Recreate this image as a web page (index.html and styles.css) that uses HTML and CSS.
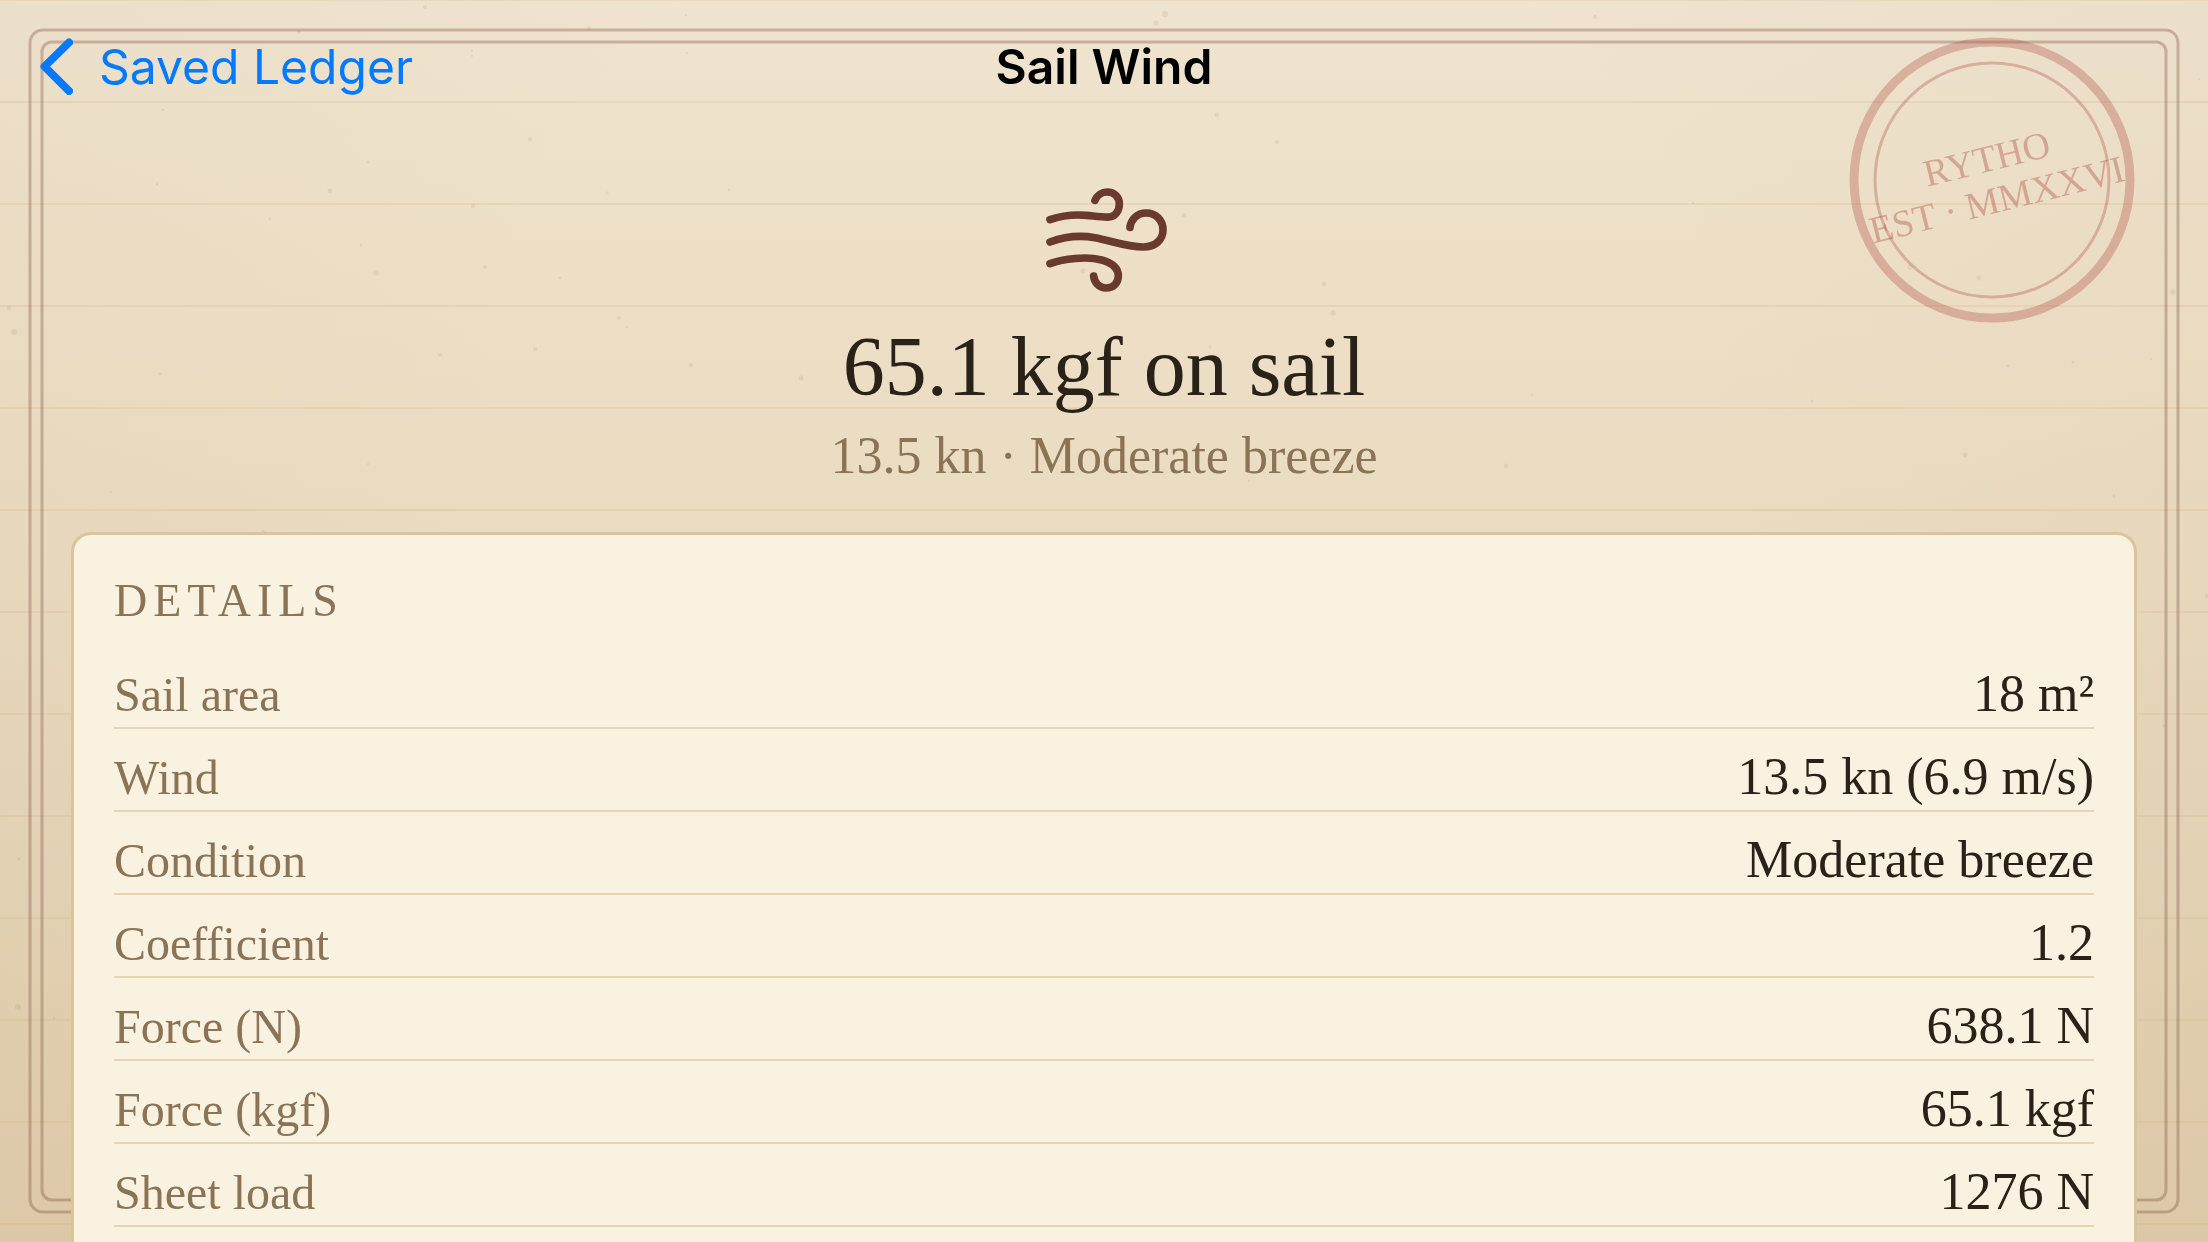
FILE: index.html
```html
<!DOCTYPE html>
<html lang="en">
<head>
<meta charset="utf-8">
<meta name="viewport" content="width=device-width, initial-scale=1">
<title>Sail Wind</title>
<link rel="stylesheet" href="styles.css">
</head>
<body>
<svg class="paper" aria-hidden="true">
  <g class="specks">
    <circle cx="425" cy="7" r="2"/><circle cx="299" cy="32" r="2"/><circle cx="589" cy="28" r="2"/><circle cx="686" cy="15" r="1"/>
    <circle cx="472" cy="51" r="1"/><circle cx="472" cy="56" r="1"/><circle cx="687" cy="53" r="1"/><circle cx="163" cy="110" r="1.3"/>
    <circle cx="530" cy="139" r="2.2"/><circle cx="368" cy="162" r="1.2"/><circle cx="157" cy="184" r="1.2"/><circle cx="330" cy="191" r="2.4"/>
    <circle cx="607" cy="193" r="1.5"/><circle cx="729" cy="190" r="1.3"/><circle cx="473" cy="206" r="2"/><circle cx="270" cy="219" r="1.2"/>
    <circle cx="361" cy="245" r="1.4"/><circle cx="376" cy="273" r="2.7"/><circle cx="485" cy="267" r="2"/><circle cx="560" cy="278" r="1.4"/>
    <circle cx="9" cy="308" r="2.2"/><circle cx="14" cy="332" r="3"/><circle cx="619" cy="318" r="2"/><circle cx="627" cy="327" r="1.2"/>
    <circle cx="535" cy="349" r="2"/><circle cx="440" cy="355" r="2"/><circle cx="691" cy="365" r="2.2"/><circle cx="801" cy="378" r="2.5"/>
    <circle cx="160" cy="374" r="1.2"/><circle cx="1083" cy="271" r="2.6"/><circle cx="368" cy="464" r="1"/><circle cx="111" cy="492" r="1"/>
    <circle cx="263" cy="532" r="2"/><circle cx="1165" cy="14" r="3"/><circle cx="1156" cy="23" r="2.6"/><circle cx="1595" cy="17" r="2"/>
    <circle cx="1217" cy="115" r="2.4"/><circle cx="1277" cy="142" r="2"/><circle cx="1184" cy="215" r="2.3"/><circle cx="1693" cy="203" r="1"/>
    <circle cx="2199" cy="79" r="1.3"/><circle cx="1324" cy="284" r="2.2"/><circle cx="1333" cy="313" r="2.7"/><circle cx="1210" cy="347" r="1.5"/>
    <circle cx="1910" cy="267" r="2.6"/><circle cx="1979" cy="278" r="2.4"/><circle cx="2173" cy="292" r="2.6"/><circle cx="2073" cy="362" r="1.5"/>
    <circle cx="2008" cy="366" r="1.3"/><circle cx="2151" cy="359" r="1.2"/><circle cx="1532" cy="395" r="1.2"/><circle cx="1812" cy="401" r="1.6"/>
    <circle cx="1506" cy="466" r="2.4"/><circle cx="1965" cy="455" r="2.4"/><circle cx="1249" cy="481" r="1.2"/><circle cx="2114" cy="496" r="1.2"/>
    <circle cx="19" cy="859" r="1.6"/><circle cx="18" cy="1007" r="3"/><circle cx="54" cy="1018" r="1"/><circle cx="2207" cy="596" r="2.2"/><circle cx="2164" cy="726" r="1.5"/>
  </g>
  <rect class="frame frame-outer" x="30" y="30" rx="13"/>
  <rect class="frame frame-inner" x="42" y="42" rx="10"/>
</svg>

<svg class="stamp" viewBox="-144 -144 288 288" role="img" aria-label="Rytho, established MMXXVI">
  <circle r="138" stroke-width="9"/>
  <circle r="117" stroke-width="3"/>
  <g transform="rotate(-14)">
    <text y="-9">RYTHO</text>
    <text y="33">EST · MMXXVI</text>
  </g>
</svg>

<header class="navbar">
  <a class="back" href="#ledger">
    <svg class="chevron" viewBox="0 0 33 57" aria-hidden="true"><path d="M29 4.500 4.500 28.500 29 53"/></svg>
    Saved Ledger
  </a>
  <h1 class="title">Sail Wind</h1>
</header>

<main class="content">
  <section class="summary">
    <svg class="wind" viewBox="72 54 360 312" aria-hidden="true">
      <path d="M90 149C130 135 165 133 200 136C230 139 250 142 268 141C285 140 298 123 298 102C298 80 282 66 262 66C245 66 231 76 225 91"/>
      <path d="M90 216C130 201 180 195 225 203C270 211 320 231 370 231C405 231 429 210 429 180C429 150 407 129 379 129C350 129 332 150 330 172"/>
      <path d="M90 281C130 266 200 258 245 270C280 280 295 298 295 318C295 340 279 354 258 354C237 354 223 337 221 318"/>
    </svg>
    <p class="headline">65.1 kgf on sail</p>
    <p class="subline">13.5 kn · Moderate breeze</p>
  </section>

  <section class="card">
    <h2 class="card-title">DETAILS</h2>
    <table class="details">
      <tbody>
        <tr><th scope="row">Sail area</th><td>18 m²</td></tr>
        <tr><th scope="row">Wind</th><td>13.5 kn (6.9 m/s)</td></tr>
        <tr><th scope="row">Condition</th><td>Moderate breeze</td></tr>
        <tr><th scope="row">Coefficient</th><td>1.2</td></tr>
        <tr><th scope="row">Force (N)</th><td>638.1 N</td></tr>
        <tr><th scope="row">Force (kgf)</th><td>65.1 kgf</td></tr>
        <tr><th scope="row">Sheet load</th><td>1276 N</td></tr>
      </tbody>
    </table>
  </section>
</main>
</body>
</html>
```
FILE: styles.css
```css
:root {
  --ink: #2a2118;
  --muted: #8b7355;
  --rust: #6b3a2e;
  --serif: "Liberation Serif", "Times New Roman", serif;
  --sans: Inter, "Liberation Sans", sans-serif;
}

* {
  box-sizing: border-box;
  margin: 0;
  padding: 0;
}

body {
  display: flex;
  flex-direction: column;
  height: 100vh;
  overflow: hidden;
  font-family: var(--serif);
  color: var(--ink);
  background:
    repeating-linear-gradient(to bottom, rgba(205, 160, 100, 0.17) 0 2px, transparent 2px 102px) 0 -1px / 100% calc(100% + 1px),
    radial-gradient(ellipse 75% 110% at 50% 30%, transparent 35%, rgba(150, 90, 60, 0.06) 100%),
    linear-gradient(to bottom, #efe4cf 0%, #ede0c7 20%, #eadcc1 42%, #e0cead 100%);
}

/* Paper texture and the double rule round the page */
.paper {
  position: fixed;
  inset: 0;
  width: 100%;
  height: 100%;
}

.specks {
  fill: rgba(139, 115, 85, 0.12);
}

.frame {
  fill: none;
  stroke: rgba(107, 58, 46, 0.3);
  stroke-width: 3px;
}

.frame-outer {
  width: calc(100% - 60px);
  height: calc(100% - 60px);
}

.frame-inner {
  width: calc(100% - 84px);
  height: calc(100% - 84px);
}

.stamp {
  position: fixed;
  top: 36px;
  right: 72px;
  width: 288px;
  height: 288px;
  overflow: visible;
}

.stamp circle {
  fill: none;
  stroke: rgba(168, 64, 56, 0.3);
}

.stamp text {
  font-family: var(--serif);
  font-size: 38px;
  text-anchor: middle;
  fill: rgba(168, 64, 56, 0.36);
}

.navbar {
  position: relative;
  display: grid;
  grid-template-columns: 1fr auto 1fr;
  align-items: center;
  flex: none;
  height: 132px;
  padding: 0 40px;
  font-family: var(--sans);
  font-size: 48px;
}

.back {
  display: flex;
  align-items: center;
  gap: 26px;
  color: #007aff;
  text-decoration: none;
}

.chevron {
  width: 33px;
  height: 57px;
  fill: none;
  stroke: currentColor;
  stroke-width: 8px;
  stroke-linecap: round;
  stroke-linejoin: round;
}

.title {
  font-size: 48px;
  font-weight: 600;
  color: #000;
}

.content {
  position: relative;
  flex: 1;
  min-height: 0;
  overflow-y: auto;
  scrollbar-width: none;
  padding: 56px 71px;
}

.summary {
  display: flex;
  flex-direction: column;
  align-items: center;
}

.wind {
  width: 120px;
  height: 104px;
  margin-bottom: 26px;
  overflow: visible;
  fill: none;
  stroke: var(--rust);
  stroke-width: 23px;
  stroke-linecap: round;
}

.headline {
  font-size: 84px;
  line-height: 98px;
}

.subline {
  margin-top: 10px;
  font-size: 52px;
  line-height: 60px;
  color: var(--muted);
}

.card {
  margin-top: 46px;
  padding: 39px 40px 40px;
  background: #faf2e0;
  border: 3px solid #dac499;
  border-radius: 20px;
}

.card-title {
  margin-bottom: 18px;
  font-size: 46px;
  font-weight: 400;
  line-height: 54px;
  letter-spacing: 6px;
  color: var(--muted);
}

.details {
  width: 100%;
  border-spacing: 0;
}

.details th,
.details td {
  height: 83px;
  padding: 18px 0 2px;
  border-bottom: 2px solid #e6d5b5;
  font-weight: 400;
  line-height: 60px;
  vertical-align: baseline;
}

.details th {
  font-size: 48px;
  text-align: left;
  color: var(--muted);
}

.details td {
  font-size: 52px;
  text-align: right;
}
```
